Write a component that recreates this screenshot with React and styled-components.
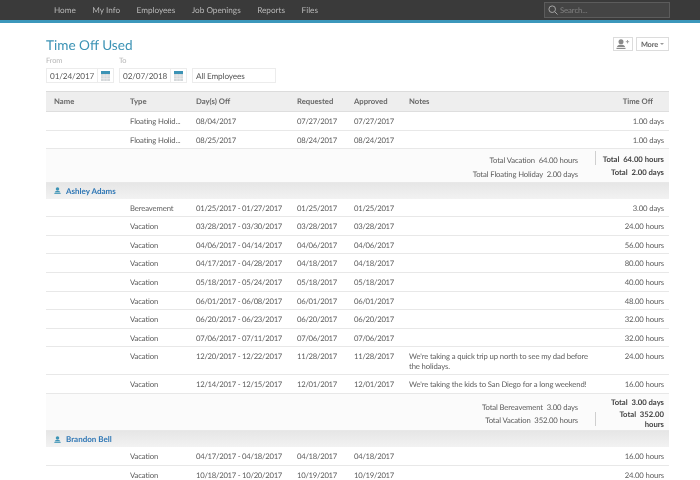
import React from "react";
import styled, { createGlobalStyle } from "styled-components";

const Global = createGlobalStyle`
  html, body { margin: 0; padding: 0; background: #fff; overflow: hidden; }
  body { font-family: "Lato", "Noto Sans", sans-serif; font-size: 7.7px; letter-spacing: -0.12px; color: #5c5c5c; text-rendering: geometricPrecision; }
`;

const Page = styled.div`width: 700px; height: 480px; overflow: hidden; filter: blur(0.3px);`;
const TopBar = styled.header`
  height: 20px; background: #3a3a3a; border-bottom: 3px solid #3c97bb;
  display: flex; align-items: center; justify-content: space-between; padding: 0 30px 0 54px;
`;
const Nav = styled.nav`display: flex; gap: 16.5px;`;
const NavItem = styled.span`color: #b8b8b8; font-size: 8.2px; letter-spacing: 0; white-space: nowrap;`;
const Search = styled.div`
  width: 126px; height: 16px; box-sizing: border-box; border: 1px solid #5c5c5c; background: #444;
  display: flex; align-items: center; gap: 2px; padding-left: 3px; color: #808080; font-size: 7.8px; margin-top: -1px;
`;
const Main = styled.main`padding: 0 31px 0 46px;`;
const Head = styled.div`display: flex; justify-content: space-between; align-items: flex-start; padding-top: 13px;`;
const Title = styled.h1`margin: 0; font-weight: 400; font-size: 13.6px; line-height: 18px; color: #3c93b5; letter-spacing: 0;`;
const Actions = styled.div`display: flex; gap: 3px; margin-top: 1px;`;
const Btn = styled.div`
  height: 14px; box-sizing: border-box; border: 1px solid #dcdcdc; background: #fff; color: #666;
  display: flex; align-items: center; justify-content: center; font-size: 7.4px; font-weight: 700;
  width: ${p => p.$w}px; gap: 2px;
`;
const Caret = styled.span`
  width: 0; height: 0; border-left: 2px solid transparent; border-right: 2px solid transparent; border-top: 2px solid #999;
`;
const Filters = styled.div`display: flex; gap: 5px; margin-top: 2px;`;
const Field = styled.div`display: flex; flex-direction: column;`;
const Label = styled.label`color: #b5b5b5; font-size: 7.4px; line-height: 10px; height: 12px;`;
const InputBox = styled.div`
  height: 15px; width: ${p => p.$w}px; box-sizing: border-box; border: 1px solid #ececec;
  display: flex; align-items: center; padding-left: 3px; color: #555; font-size: 8.2px; justify-content: space-between;
`;
const Cal = styled.span`
  width: 15px; height: 100%; border-left: 1px solid #ececec; display: flex; align-items: center; justify-content: center;
`;
const Table = styled.div`margin-top: 8px; width: 623px;`;
const Row = styled.div`
  display: grid; grid-template-columns: 84px 66px 101px 57px 55px 1fr 60px;
  min-height: ${p => p.$h || 18.6}px; box-sizing: border-box; border-bottom: 1px solid #e8e8e8; align-items: start;
  padding-top: 5px; line-height: 9.5px;
`;
const HeaderRow = styled(Row)`
  min-height: 21px; background: #eeeeee; border-top: 1px solid #dcdcdc; border-bottom: 1px solid #dedede;
  font-weight: 700; color: #686868; padding-top: 4px; letter-spacing: 0; line-height: 10px;
`;
const Cell = styled.div`padding-left: ${p => p.$pad || 0}px;`;
const DateCell = styled.div`letter-spacing: -0.26px;`;
const Right = styled.div`text-align: right; padding-right: ${p => p.$pad || 5}px; white-space: nowrap;`;
const Totals = styled.div`
  height: ${p => p.$h}px; background: #fbfbfb; border-bottom: 1px solid #e8e8e8; box-sizing: border-box;
  display: flex; justify-content: flex-end;
`;
const TotalLabels = styled.div`
  display: flex; flex-direction: column; text-align: right; gap: ${p => p.$gap}px; padding-top: ${p => p.$top}px; padding-right: 17px;
`;
const Divider = styled.div`width: 1px; background: #cfcfcf; height: 14px; margin-top: ${p => p.$mt}px;`;
const TotalValues = styled.div`
  text-align: right; padding: ${p => p.$top}px 5px 0 0; display: flex; flex-direction: column;
  gap: ${p => p.$gap}px; font-weight: 700; color: #444; line-height: 9.5px; width: 68px; letter-spacing: 0;
`;
const Group = styled.div`
  height: 16px; background: linear-gradient(#e6e6e6, #f2f2f2); display: flex; align-items: center; padding-left: 8px; gap: 5px;
  color: #2f77b5; font-weight: 700; font-size: 8px; letter-spacing: 0;
`;

const PersonIcon = ({ color = "#3c93b5", w = 7 }) => (
  <svg width={w} height={w} viewBox="0 0 10 10"><circle cx="5" cy="2.8" r="2.5" fill={color} /><path d="M1 8 C1 6.4 3 5.8 5 5.8 C7 5.8 9 6.4 9 8 Z" fill={color} /><rect x="0.5" y="8.8" width="9" height="1.2" fill={color} /></svg>
);
const AddPersonIcon = () => (
  <svg width="14" height="10" viewBox="0 0 14 10"><circle cx="5" cy="2.8" r="2.5" fill="#8a8a8a" /><path d="M1 8 C1 6.4 3 5.8 5 5.8 C7 5.8 9 6.4 9 8 Z" fill="#8a8a8a" /><rect x="0.5" y="8.8" width="9" height="1.2" fill="#8a8a8a" /><path d="M11.5 1v3.4M9.8 2.7h3.4" stroke="#9a9a9a" strokeWidth=".9" fill="none" /></svg>
);
const CalIcon = () => (
  <svg width="9" height="10" viewBox="0 0 9 10"><rect width="9" height="10" fill="#d4d8da" /><rect width="9" height="3" fill="#3c93b5" /><path d="M0 5h9M0 7.5h9M3 3v7M6 3v7" stroke="#f2f2f2" strokeWidth=".6" /></svg>
);
const SearchIcon = () => (
  <svg width="10" height="10" viewBox="0 0 10 10" fill="none" stroke="#a5a5a5" strokeWidth="1"><circle cx="4.2" cy="4.2" r="3.3" /><path d="M6.7 6.7 L9.5 9.5" /></svg>
);

const Data = ({ t, d, r, a, n, o, h }) => (
  <Row $h={h}><Cell /><Cell>{t}</Cell><DateCell>{d}</DateCell><DateCell>{r}</DateCell><DateCell>{a}</DateCell><Cell>{n}</Cell><Right>{o}</Right></Row>
);

const ashley = [
  ["Bereavement", "01/25/2017 - 01/27/2017", "01/25/2017", "3.00 days"],
  ["Vacation", "03/28/2017 - 03/30/2017", "03/28/2017", "24.00 hours"],
  ["Vacation", "04/06/2017 - 04/14/2017", "04/06/2017", "56.00 hours"],
  ["Vacation", "04/17/2017 - 04/28/2017", "04/18/2017", "80.00 hours"],
  ["Vacation", "05/18/2017 - 05/24/2017", "05/18/2017", "40.00 hours"],
  ["Vacation", "06/01/2017 - 06/08/2017", "06/01/2017", "48.00 hours"],
  ["Vacation", "06/20/2017 - 06/23/2017", "06/20/2017", "32.00 hours"],
  ["Vacation", "07/06/2017 - 07/11/2017", "07/06/2017", "32.00 hours"],
];

export default function App() {
  return (
    <Page>
      <Global />
      <TopBar>
        <Nav>{["Home", "My Info", "Employees", "Job Openings", "Reports", "Files"].map(x => <NavItem key={x}>{x}</NavItem>)}</Nav>
        <Search><SearchIcon />Search...</Search>
      </TopBar>
      <Main>
        <Head>
          <Title>Time Off Used</Title>
          <Actions>
            <Btn $w={20}><AddPersonIcon /></Btn>
            <Btn $w={33}>More <Caret /></Btn>
          </Actions>
        </Head>
        <Filters>
          <Field><Label>From</Label><InputBox $w={68}>01/24/2017<Cal><CalIcon /></Cal></InputBox></Field>
          <Field><Label>To</Label><InputBox $w={68}>02/07/2018<Cal><CalIcon /></Cal></InputBox></Field>
          <Field><Label>&nbsp;</Label><InputBox $w={84}>All Employees</InputBox></Field>
        </Filters>
        <Table>
          <HeaderRow><Cell $pad={8}>Name</Cell><Cell>Type</Cell><Cell>Day(s) Off</Cell><Cell>Requested</Cell><Cell>Approved</Cell><Cell>Notes</Cell><Right $pad={16}>Time Off</Right></HeaderRow>
          <Data t="Floating Holid..." d="08/04/2017" r="07/27/2017" a="07/27/2017" o="1.00 days" />
          <Data t="Floating Holid..." d="08/25/2017" r="08/24/2017" a="08/24/2017" o="1.00 days" />
          <Totals $h={33.5}>
            <TotalLabels $gap={3.5} $top={6}><div>Total Vacation&nbsp; 64.00 hours</div><div>Total Floating Holiday&nbsp; 2.00 days</div></TotalLabels>
            <Divider $mt={2} />
            <TotalValues $gap={3.5} $top={6}><div>Total&nbsp; 64.00 hours</div><div>Total&nbsp; 2.00 days</div></TotalValues>
          </Totals>
          <Group><PersonIcon />Ashley Adams</Group>
          {ashley.map(([t, d, r, o]) => <Data key={d} t={t} d={d} r={r} a={r} o={o} />)}
          <Data h={27.5} t="Vacation" d="12/20/2017 - 12/22/2017" r="11/28/2017" a="11/28/2017" n={<>We're taking a quick trip up north to see my dad before<br />the holidays.</>} o="24.00 hours" />
          <Data t="Vacation" d="12/14/2017 - 12/15/2017" r="12/01/2017" a="12/01/2017" n="We're taking the kids to San Diego for a long weekend!" o="16.00 hours" />
          <Totals $h={37.5}>
            <TotalLabels $gap={3.5} $top={8}><div>Total Bereavement&nbsp; 3.00 days</div><div>Total Vacation&nbsp; 352.00 hours</div></TotalLabels>
            <Divider $mt={18} />
            <TotalValues $gap={3} $top={4}><div>Total&nbsp; 3.00 days</div><div>Total&nbsp; 352.00<br />hours</div></TotalValues>
          </Totals>
          <Group><PersonIcon />Brandon Bell</Group>
          <Data t="Vacation" d="04/17/2017 - 04/18/2017" r="04/18/2017" a="04/18/2017" o="16.00 hours" />
          <Data t="Vacation" d="10/18/2017 - 10/20/2017" r="10/19/2017" a="10/19/2017" o="24.00 hours" />
        </Table>
      </Main>
    </Page>
  );
}
